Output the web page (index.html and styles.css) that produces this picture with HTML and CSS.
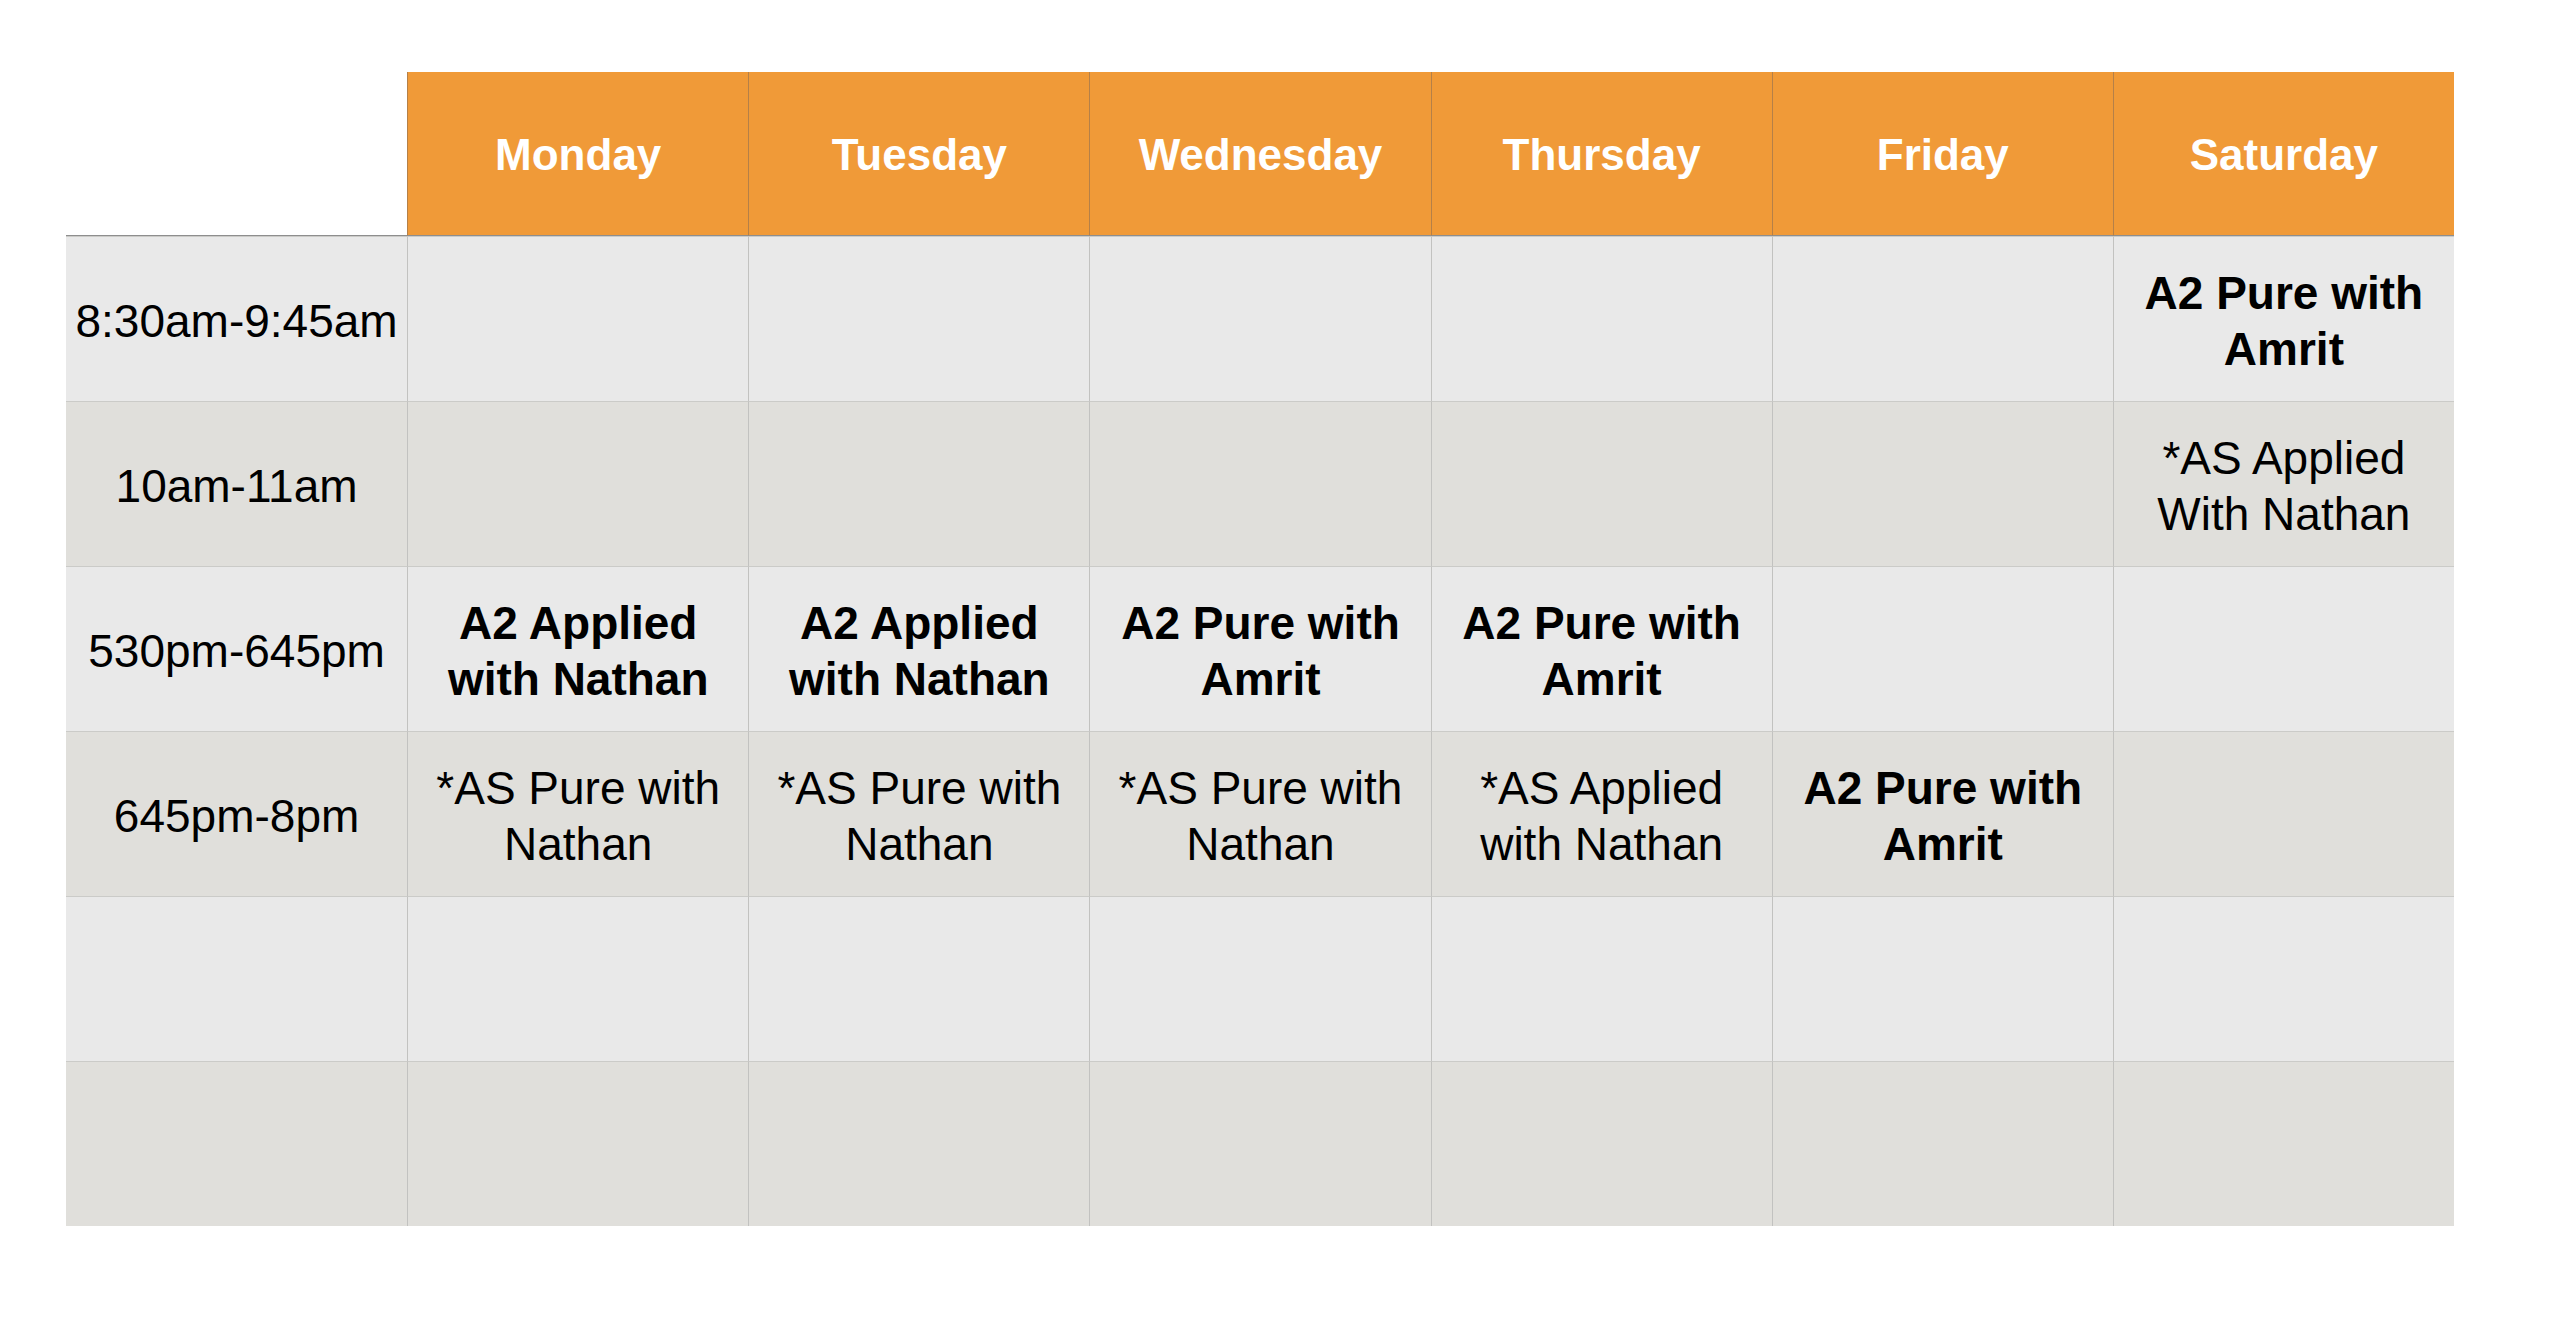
FILE: index.html
```html
<!DOCTYPE html>
<html>
<head>
<meta charset="utf-8">
<link rel="stylesheet" href="styles.css">
</head>
<body>
<div class="schedule">
  <div class="cell corner"></div>
  <div class="cell head">Monday</div>
  <div class="cell head">Tuesday</div>
  <div class="cell head">Wednesday</div>
  <div class="cell head">Thursday</div>
  <div class="cell head">Friday</div>
  <div class="cell head">Saturday</div>

  <div class="cell odd time">8:30am-9:45am</div>
  <div class="cell odd"></div>
  <div class="cell odd"></div>
  <div class="cell odd"></div>
  <div class="cell odd"></div>
  <div class="cell odd"></div>
  <div class="cell odd bold">A2 Pure with Amrit</div>

  <div class="cell even time">10am-11am</div>
  <div class="cell even"></div>
  <div class="cell even"></div>
  <div class="cell even"></div>
  <div class="cell even"></div>
  <div class="cell even"></div>
  <div class="cell even">*AS Applied With Nathan</div>

  <div class="cell odd time">530pm-645pm</div>
  <div class="cell odd bold">A2 Applied with Nathan</div>
  <div class="cell odd bold">A2 Applied with Nathan</div>
  <div class="cell odd bold">A2 Pure with Amrit</div>
  <div class="cell odd bold">A2 Pure with Amrit</div>
  <div class="cell odd"></div>
  <div class="cell odd"></div>

  <div class="cell even time">645pm-8pm</div>
  <div class="cell even">*AS Pure with Nathan</div>
  <div class="cell even">*AS Pure with Nathan</div>
  <div class="cell even">*AS Pure with Nathan</div>
  <div class="cell even">*AS Applied with Nathan</div>
  <div class="cell even bold">A2 Pure with Amrit</div>
  <div class="cell even"></div>

  <div class="cell odd time"></div>
  <div class="cell odd"></div>
  <div class="cell odd"></div>
  <div class="cell odd"></div>
  <div class="cell odd"></div>
  <div class="cell odd"></div>
  <div class="cell odd"></div>

  <div class="cell even time"></div>
  <div class="cell even"></div>
  <div class="cell even"></div>
  <div class="cell even"></div>
  <div class="cell even"></div>
  <div class="cell even"></div>
  <div class="cell even"></div>
</div>
</body>
</html>
```

FILE: styles.css
```css
html, body {
  margin: 0;
  padding: 0;
  background: #ffffff;
}

body {
  font-family: "Liberation Sans", Arial, Helvetica, sans-serif;
  color: #000000;
}

.schedule {
  display: grid;
  grid-template-columns: repeat(7, 1fr);
  grid-template-rows: 164px repeat(6, 165px);
  width: 2388px;
  margin: 72px 0 0 66px;
}

.cell {
  display: flex;
  align-items: center;
  justify-content: center;
  text-align: center;
  font-size: 46px;
  line-height: 56px;
  padding: 3px 14px 0;
  box-sizing: border-box;
  border-left: 1px solid #c2c2c0;
  border-top: 1px solid #cbcbc8;
}

.corner {
  background: #ffffff;
  border-left: none;
  border-top: none;
  border-bottom: 1px solid #8e8e8e;
}

.head {
  background: #f09a38;
  color: #ffffff;
  font-weight: bold;
  font-size: 44px;
  border-top: none;
  border-left: 1px solid #b58048;
  border-bottom: 1px solid #8e8e8e;
}

.time {
  border-left: none;
  white-space: nowrap;
  padding-left: 0;
  padding-right: 0;
}

.odd {
  background: #e9e9e9;
}

.even {
  background: #e0dfdb;
}

.bold {
  font-weight: bold;
}
```
